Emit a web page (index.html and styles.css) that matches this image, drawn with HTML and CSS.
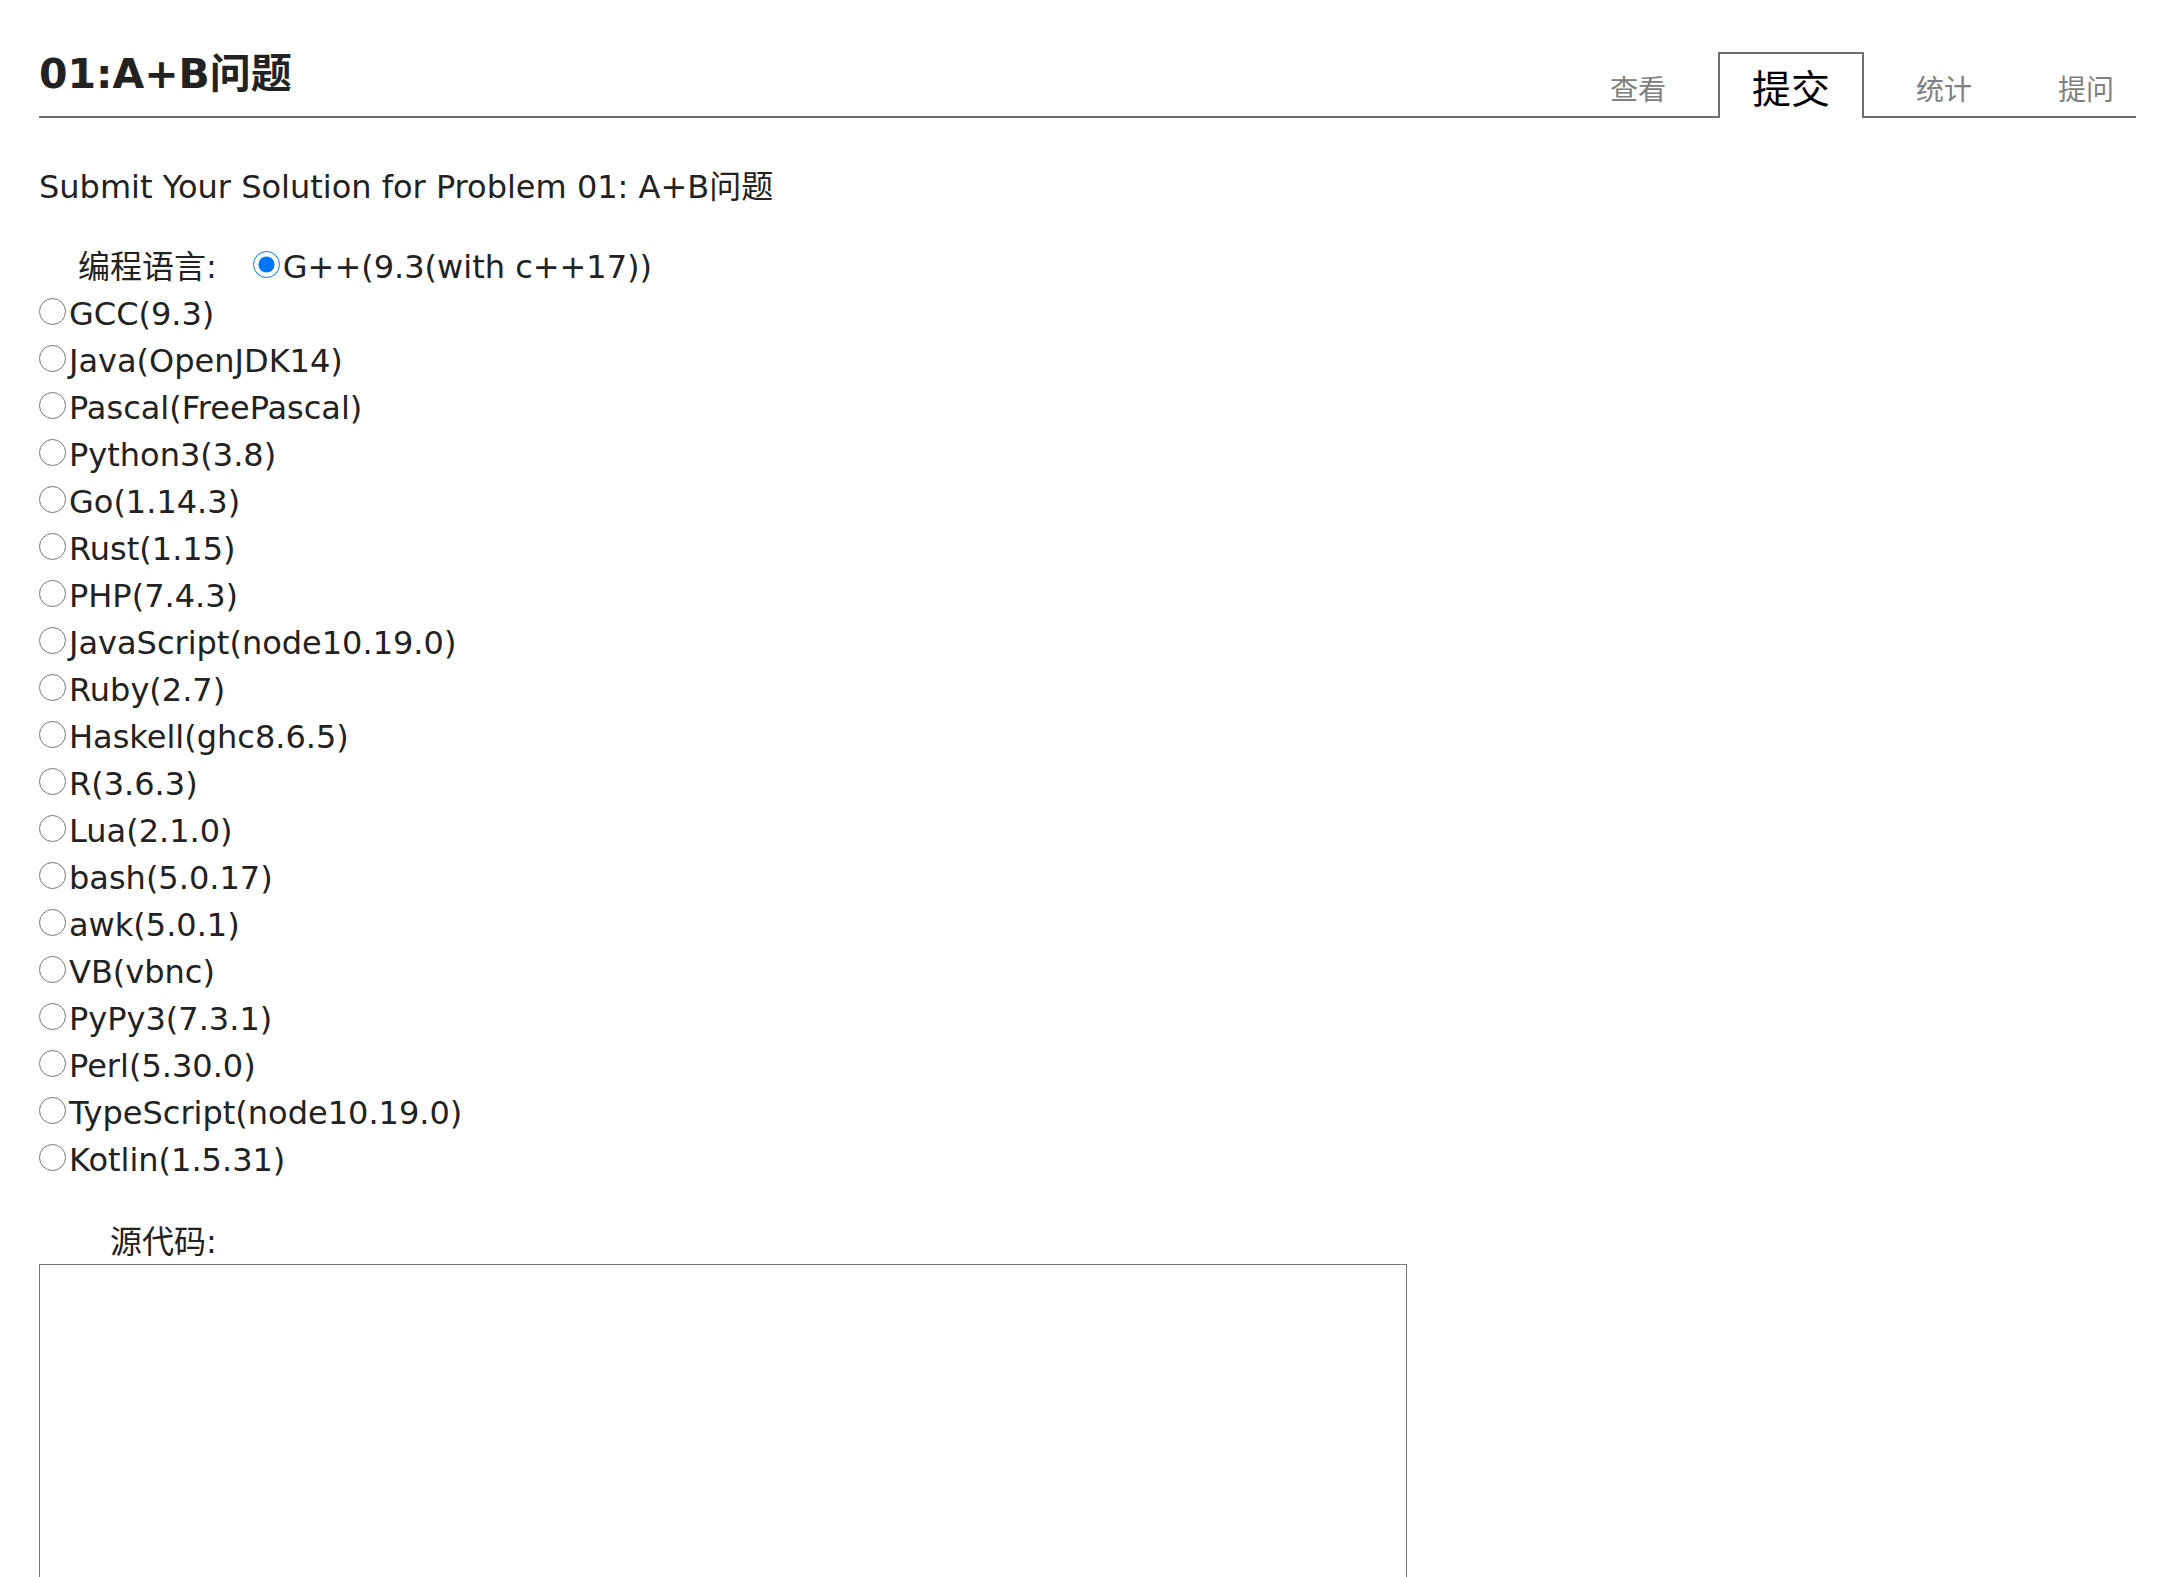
FILE: index.html
```html
<!DOCTYPE html>
<html lang="zh">
<head>
  <meta charset="UTF-8">
  <meta name="viewport" content="width=device-width, initial-scale=1.0">
  <title>01:A+B问题</title>
  <link rel="stylesheet" href="styles.css">
</head>
<body>
  <div class="page">
    <div class="header">
      <h1 class="title">01:A+B问题</h1>
      <ul class="tabs">
        <li>查看</li>
        <li class="active">提交</li>
        <li>统计</li>
        <li>提问</li>
      </ul>
    </div>
    <p class="subtitle">Submit Your Solution for Problem 01: A+B问题</p>
    <form class="submit-form">
      <div class="langs">
        <span class="field-label">编程语言:</span><label><input type="radio" name="lang" checked>G++(9.3(with c++17))</label><br>
        <label><input type="radio" name="lang">GCC(9.3)</label><br>
        <label><input type="radio" name="lang">Java(OpenJDK14)</label><br>
        <label><input type="radio" name="lang">Pascal(FreePascal)</label><br>
        <label><input type="radio" name="lang">Python3(3.8)</label><br>
        <label><input type="radio" name="lang">Go(1.14.3)</label><br>
        <label><input type="radio" name="lang">Rust(1.15)</label><br>
        <label><input type="radio" name="lang">PHP(7.4.3)</label><br>
        <label><input type="radio" name="lang">JavaScript(node10.19.0)</label><br>
        <label><input type="radio" name="lang">Ruby(2.7)</label><br>
        <label><input type="radio" name="lang">Haskell(ghc8.6.5)</label><br>
        <label><input type="radio" name="lang">R(3.6.3)</label><br>
        <label><input type="radio" name="lang">Lua(2.1.0)</label><br>
        <label><input type="radio" name="lang">bash(5.0.17)</label><br>
        <label><input type="radio" name="lang">awk(5.0.1)</label><br>
        <label><input type="radio" name="lang">VB(vbnc)</label><br>
        <label><input type="radio" name="lang">PyPy3(7.3.1)</label><br>
        <label><input type="radio" name="lang">Perl(5.30.0)</label><br>
        <label><input type="radio" name="lang">TypeScript(node10.19.0)</label><br>
        <label><input type="radio" name="lang">Kotlin(1.5.31)</label>
      </div>
      <div class="code-label">源代码:</div>
      <textarea class="code" name="source"></textarea>
    </form>
  </div>
</body>
</html>
```

FILE: styles.css
```css
* {
  box-sizing: border-box;
}
body {
  margin: 0;
  color: #222;
  background: #fff;
  font-family: "DejaVu Sans", "Noto Sans CJK SC", sans-serif;
}
.page {
  padding: 50px 47px 0 39px;
}
.header {
  display: flex;
  justify-content: space-between;
  align-items: flex-end;
  border-bottom: 2px solid #707070;
}
.title {
  margin: 0 0 17px;
  font-size: 41px;
  line-height: 49px;
  font-weight: bold;
}
.tabs {
  display: flex;
  align-items: flex-end;
  list-style: none;
  margin: 0 0 -2px;
  padding: 0;
  font-family: "Noto Sans CJK SC", sans-serif;
}
.tabs li {
  margin-left: 18px;
  padding: 0 32px;
  border: 2px solid transparent;
  border-bottom: 0;
  font-size: 28px;
  line-height: 60px;
  color: #808080;
}
.tabs li:last-child {
  padding-right: 20px;
}
.tabs li.active {
  font-size: 39px;
  line-height: 64px;
  color: #000;
  border-color: #707070;
  background: #fff;
}
.subtitle {
  margin: 49px 0 0;
  font-size: 32px;
  line-height: 40px;
}
.langs {
  margin-top: 37px;
  font-size: 32px;
  line-height: 47px;
}
.field-label {
  padding: 0 36px 0 39px;
}
.langs input {
  width: 27px;
  height: 27px;
  margin: 0 3px 0 0;
}
.code-label {
  margin-top: 38px;
  padding-left: 71px;
  font-size: 32px;
  line-height: 40px;
}
.code {
  display: block;
  width: 1368px;
  height: 420px;
  margin-top: 2px;
  border: 1px solid #767676;
}
```
